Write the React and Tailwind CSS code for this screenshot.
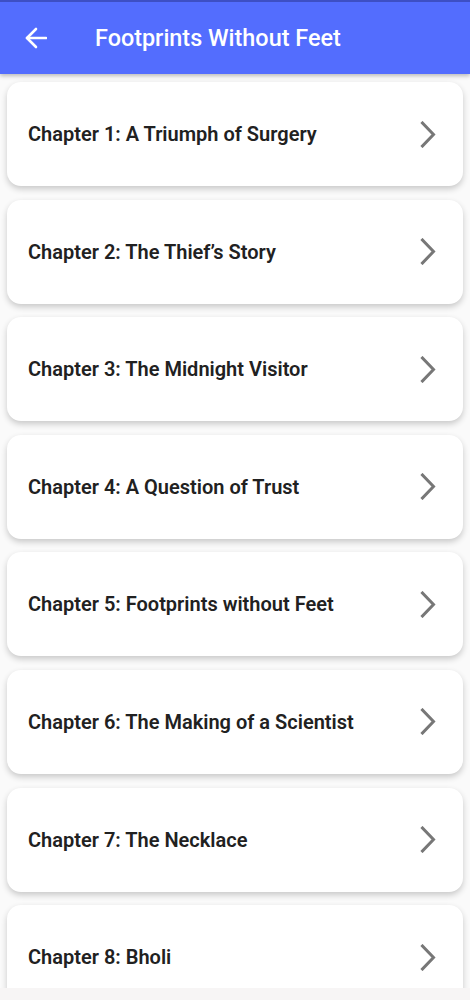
const chapters = [
  'Chapter 1: A Triumph of Surgery',
  'Chapter 2: The Thief’s Story',
  'Chapter 3: The Midnight Visitor',
  'Chapter 4: A Question of Trust',
  'Chapter 5: Footprints without Feet',
  'Chapter 6: The Making of a Scientist',
  'Chapter 7: The Necklace',
  'Chapter 8: Bholi',
];

function BackArrow() {
  return (
    <svg width="22" height="22" viewBox="0 0 22 22" fill="none" stroke="white" strokeWidth="2.6" strokeLinecap="round" strokeLinejoin="round">
      <path d="M21 11H2" />
      <path d="M11 2 2 11l9 9" />
    </svg>
  );
}

function Chevron() {
  return (
    <svg width="16" height="27" viewBox="0 0 16 27" fill="none" stroke="#777777" strokeWidth="3" strokeLinecap="square">
      <path d="M2.5 2 13.5 13.5 2.5 25" />
    </svg>
  );
}

export default function App() {
  return (
    <div className="w-[470px] h-[1000px] overflow-hidden bg-[#fafafa] flex flex-col font-['Roboto',sans-serif]">
      {/* App bar */}
      <div className="shrink-0 h-[74px] bg-[#536dfe] border-t-2 border-[#3d4fc4] flex items-center shadow-[0_2px_4px_rgba(0,0,0,0.25)] z-10">
        <div className="w-[72px] pl-[25px] flex items-center">
          <BackArrow />
        </div>
        <h1 className="pl-[23px] pt-[2px] text-white text-[23.4px] font-medium">
          Footprints Without Feet
        </h1>
      </div>

      {/* Chapter list */}
      <div className="flex-1 overflow-hidden px-[7px] pt-[8px] flex flex-col gap-[13.6px]">
        {chapters.map((title) => (
          <div
            key={title}
            className="shrink-0 h-[104px] bg-white rounded-[14px] shadow-[0_3px_6px_rgba(0,0,0,0.2)] flex items-center justify-between pl-[21px] pr-[27px]"
          >
            <span className="text-[20px] font-semibold text-[#212121]">{title}</span>
            <Chevron />
          </div>
        ))}
      </div>

      <div className="shrink-0 h-[12px] bg-[#f7f5f5]" />
    </div>
  );
}
